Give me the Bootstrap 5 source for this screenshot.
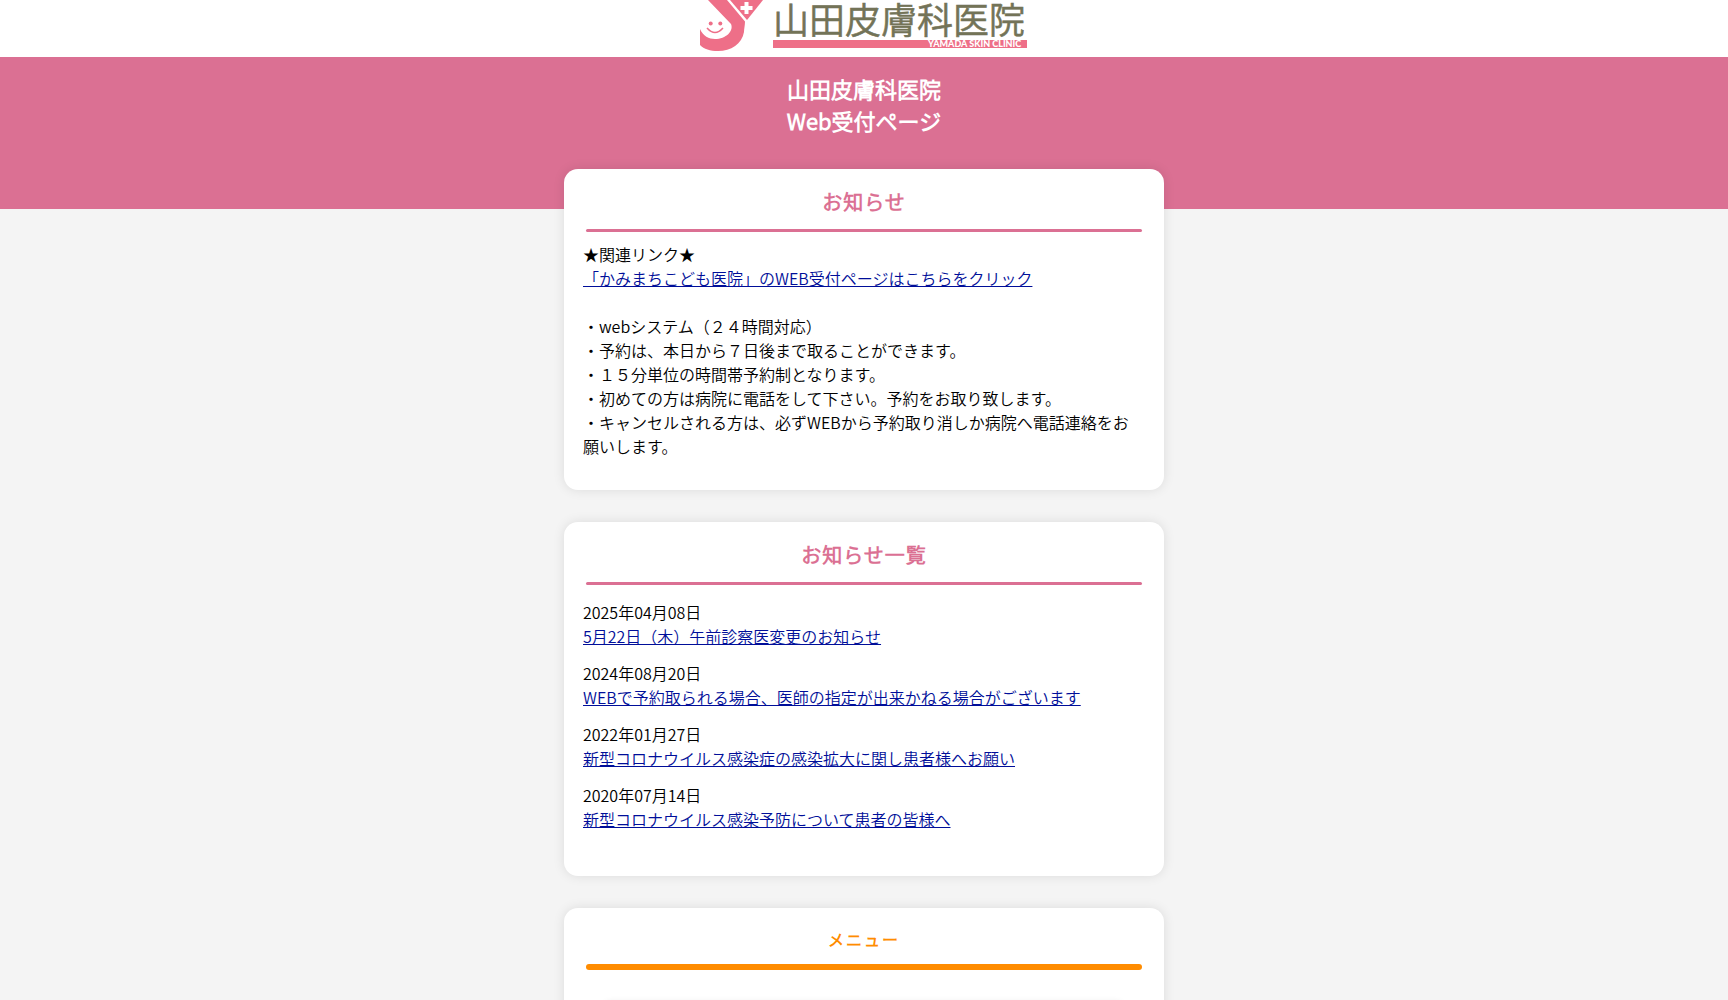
<!DOCTYPE html>
<html lang="ja">
<head>
<meta charset="utf-8">
<meta name="viewport" content="width=device-width, initial-scale=1">
<title>山田皮膚科医院 Web受付ページ</title>
<link href="https://cdn.jsdelivr.net/npm/bootstrap@5.3.0/dist/css/bootstrap.min.css" rel="stylesheet">
<style>
body { background: #f4f4f4; color: #000; font-family: "Noto Sans CJK JP DemiLight", "Noto Sans CJK JP", sans-serif; font-size: 16px; line-height: 24px; }
a { color: #000e99; }
.site-head { padding-bottom: 5px; }
.site-logo { width: 328px; max-width: 100%; height: 52px; }
.hero { background: #db7093; padding: 15px 16px 73px; }
.hero h1 { font-size: 22px; line-height: 32px; }
.board { max-width: 600px; margin-top: -40px; gap: 32px; }
.panel { border-radius: 14px; box-shadow: 0 0 12px rgba(0, 0, 0, .1); padding: 18px 20px 32px 19px; }
.panel-title { color: #db7093; font-size: 20px; line-height: 30px; letter-spacing: 1px; margin: 0 2px 10px 3px; }
.panel-title::after, .menu-title::after { content: ""; display: block; height: 3px; border-radius: 2px; background: #db7093; }
.panel-title::after { margin-top: 12px; }
.menu-title { color: #ff8c00; font-size: 16px; line-height: 26px; letter-spacing: 2px; margin: 0 2px 32px 3px; }
.menu-title::after { height: 6px; border-radius: 3px; background: #ff8c00; margin-top: 12px; }
.news { padding-top: 5px; }
.news dd { margin-bottom: 13px; }
.news dt { font-weight: 400; }
.menu-box { height: 120px; margin: 0 20px; border-radius: 8px; box-shadow: 0 0 6px rgba(0, 0, 0, .1); }
</style>
<script src="https://cdn.jsdelivr.net/npm/bootstrap@5.3.0/dist/js/bootstrap.bundle.min.js"></script>
</head>
<body>
<header class="site-head bg-white text-center">
  <svg class="site-logo d-block mx-auto" viewBox="0 0 328 52" role="img" aria-label="山田皮膚科医院 YAMADA SKIN CLINIC">
    <g fill="#ee6f88">
      <path d="M8 0H27L45 21.500C45 25 44 29 44 32C42 44 31 51 18 51C10 51 4 49 0 45V29C3 36 9 39 15 39C26 39 34 31 31 24Z"/>
      <path d="M30 0H63L47 20Z"/>
      <rect x="73" y="40" width="254" height="8"/>
      <circle cx="10.700" cy="23.500" r="2"/><circle cx="20.300" cy="23.500" r="2"/>
    </g>
    <path d="M7 28Q15 37 23 28" fill="none" stroke="#ee6f88" stroke-width="1.500"/>
    <path d="M46.500 2V14M40.500 8H52.500" fill="none" stroke="#fff" stroke-width="4"/>
    <text x="73" y="34" font-size="36" fill="#737357" stroke="#737357" stroke-width=".6">山田皮膚科医院</text>
    <text x="228" y="47" font-family="Lato, sans-serif" font-size="9" font-weight="900" fill="#fff">YAMADA SKIN CLINIC</text>
  </svg>
</header>
<section class="hero text-center text-white">
  <h1 class="fw-bold mb-0">山田皮膚科医院<br>Web受付ページ</h1>
</section>
<main class="board mx-auto d-flex flex-column">
  <section class="panel bg-white">
    <h2 class="panel-title fw-bold text-center">お知らせ</h2>
    <p class="mb-4">★関連リンク★<br><a href="#">「かみまちこども医院」のWEB受付ページはこちらをクリック</a></p>
    <p class="mb-0">・webシステム（２４時間対応）<br>・予約は、本日から７日後まで取ることができます。<br>・１５分単位の時間帯予約制となります。<br>・初めての方は病院に電話をして下さい。予約をお取り致します。<br>・キャンセルされる方は、必ずWEBから予約取り消しか病院へ電話連絡をお願いします。</p>
  </section>
  <section class="panel bg-white">
    <h2 class="panel-title fw-bold text-center">お知らせ一覧</h2>
    <dl class="news mb-0">
      <dt>2025年04月08日</dt><dd><a href="#">5月22日（木）午前診察医変更のお知らせ</a></dd>
      <dt>2024年08月20日</dt><dd><a href="#">WEBで予約取られる場合、医師の指定が出来かねる場合がございます</a></dd>
      <dt>2022年01月27日</dt><dd><a href="#">新型コロナウイルス感染症の感染拡大に関し患者様へお願い</a></dd>
      <dt>2020年07月14日</dt><dd><a href="#">新型コロナウイルス感染予防について患者の皆様へ</a></dd>
    </dl>
  </section>
  <section class="panel bg-white">
    <h2 class="menu-title fw-bold text-center">メニュー</h2>
    <div class="menu-box bg-white"></div>
  </section>
</main>
</body>
</html>
